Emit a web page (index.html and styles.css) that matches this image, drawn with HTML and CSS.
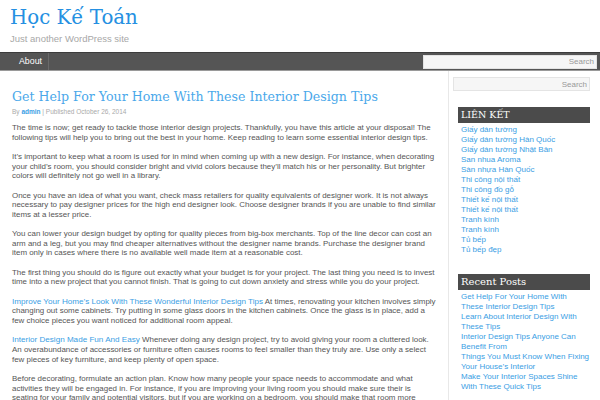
FILE: index.html
```html
<!DOCTYPE html>
<html>
<head>
<meta charset="utf-8">
<link rel="stylesheet" href="styles.css">
</head>
<body>
<header class="site-header">
  <h1 class="site-title">Học Kế Toán</h1>
  <div class="site-desc">Just another WordPress site</div>
</header>
<nav class="nav">
  <ul class="menu"><li>About</li></ul>
  <div class="nav-search"><input type="text" placeholder="Search"></div>
</nav>
<div class="wrap">
  <main class="content">
    <h2 class="post-title">Get Help For Your Home With These Interior Design Tips</h2>
    <div class="meta">By <a class="author">admin</a> | Published October 26, 2014</div>
    <p>The time is now; get ready to tackle those interior design projects. Thankfully, you have this article at your disposal! The following tips will help you to bring out the best in your home. Keep reading to learn some essential interior design tips.</p>
    <p>It’s important to keep what a room is used for in mind when coming up with a new design. For instance, when decorating your child’s room, you should consider bright and vivid colors because they’ll match his or her personality. But brighter colors will definitely not go well in a library.</p>
    <p>Once you have an idea of what you want, check mass retailers for quality equivalents of designer work. It is not always necessary to pay designer prices for the high end designer look. Choose designer brands if you are unable to find similar items at a lesser price.</p>
    <p>You can lower your design budget by opting for quality pieces from big-box merchants. Top of the line decor can cost an arm and a leg, but you may find cheaper alternatives without the designer name brands. Purchase the designer brand item only in cases where there is no available well made item at a reasonable cost.</p>
    <p>The first thing you should do is figure out exactly what your budget is for your project. The last thing you need is to invest time into a new project that you cannot finish. That is going to cut down anxiety and stress while you do your project.</p>
    <p><a>Improve Your Home’s Look With These Wonderful Interior Design Tips</a> At times, renovating your kitchen involves simply changing out some cabinets. Try putting in some glass doors in the kitchen cabinets. Once the glass is in place, add a few choice pieces you want noticed for additional room appeal.</p>
    <p><a>Interior Design Made Fun And Easy</a> Whenever doing any design project, try to avoid giving your room a cluttered look. An overabundance of accessories or furniture often causes rooms to feel smaller than they truly are. Use only a select few pieces of key furniture, and keep plenty of open space.</p>
    <p>Before decorating, formulate an action plan. Know how many people your space needs to accommodate and what activities they will be engaged in. For instance, if you are improving your living room you should make sure their is seating for your family and potential visitors, but if you are working on a bedroom, you should make that room more comfortable.</p>
  </main>
  <aside class="sidebar">
    <div class="side-search"><input type="text" placeholder="Search"></div>
    <section class="widget">
      <h3 class="widget-title">LIÊN KẾT</h3>
      <ul class="links">
        <li><a>Giấy dán tường</a></li>
        <li><a>Giấy dán tường Hàn Quốc</a></li>
        <li><a>Giấy dán tường Nhật Bản</a></li>
        <li><a>San nhua Aroma</a></li>
        <li><a>Sàn nhựa Hàn Quốc</a></li>
        <li><a>Thi công nội thất</a></li>
        <li><a>Thi công đồ gỗ</a></li>
        <li><a>Thiết kế nội thất</a></li>
        <li><a>Thiết kế nội thất</a></li>
        <li><a>Tranh kính</a></li>
        <li><a>Tranh kính</a></li>
        <li><a>Tủ bếp</a></li>
        <li><a>Tủ bếp đẹp</a></li>
      </ul>
    </section>
    <section class="widget">
      <h3 class="widget-title recent">Recent Posts</h3>
      <ul class="links">
        <li><a>Get Help For Your Home With These Interior Design Tips</a></li>
        <li><a>Learn About Interior Design With These Tips</a></li>
        <li><a>Interior Design Tips Anyone Can Benefit From</a></li>
        <li><a>Things You Must Know When Fixing Your House’s Interior</a></li>
        <li><a>Make Your Interior Spaces Shine With These Quick Tips</a></li>
      </ul>
    </section>
  </aside>
</div>
</body>
</html>
```

FILE: styles.css
```css
html, body {
  margin: 0;
  padding: 0;
  background: #fff;
  overflow: hidden;
}
body {
  font-family: "Liberation Sans", Arial, sans-serif;
  color: #555;
}
a { color: #3a9ee4; text-decoration: none; }

.site-header {
  height: 52px;
  padding-left: 10px;
  box-sizing: border-box;
  padding-top: 6px;
}
.site-title {
  margin: 0;
  font-family: "DejaVu Serif", serif;
  font-weight: normal;
  font-size: 19.8px;
  line-height: 24px;
  color: #2590e2;
}
.site-desc {
  margin-top: 3px;
  font-size: 9.5px;
  color: #a8a8a8;
  line-height: 11px;
}

.nav {
  display: flex;
  justify-content: space-between;
  align-items: center;
  height: 17px;
  background: #555;
  border-top: 1px solid #3c3c3c;
  border-bottom: 1px solid #9a9a9a;
}
.menu {
  list-style: none;
  margin: 0;
  padding: 0 0 0 10px;
  display: flex;
  height: 100%;
}
.menu li {
  padding: 0 6px 0 9px;
  color: #fff;
  font-size: 8.8px;
  line-height: 17px;
  border-right: 1px solid #6a6a6a;
}
.nav-search { padding-right: 3px; }
.nav-search input, .side-search input {
  display: block;
  box-sizing: border-box;
  border: 1px solid #e4e4e4;
  background: #f6f6f6;
  text-align: right;
  font-family: "Liberation Sans", Arial, sans-serif;
  font-size: 8px;
  padding: 0 2px;
  outline: none;
}
.nav-search input { width: 174px; height: 14px; }
.nav-search input::placeholder, .side-search input::placeholder { color: #999; }

.wrap {
  display: flex;
  align-items: flex-start;
}
.content {
  width: 449px;
  box-sizing: border-box;
  padding: 18px 10px 0 12px;
  border-right: 1px solid #e8e8e8;
  min-height: 400px;
  flex-shrink: 0;
}
.post-title {
  margin: 0;
  font-family: "DejaVu Serif", serif;
  font-weight: normal;
  font-size: 12.6px;
  line-height: 16px;
  color: #4aa8ea;
}
.meta {
  margin-top: 2px;
  font-size: 6.5px;
  color: #aaa;
  line-height: 9px;
}
.meta .author { font-weight: bold; color: #3a9ee4; }
.content p {
  margin: 9.65px 0 0 0;
  font-size: 7.95px;
  line-height: 9.65px;
  color: #555;
}
.content p a { font-size: 8.1px; }
.content p:first-of-type { margin-top: 7px; }

.sidebar {
  width: 151px;
  flex-shrink: 0;
  box-sizing: border-box;
  padding: 6px 0 0 4px;
}
.side-search input { width: 137px; height: 14px; }
.widget { margin-top: 16px; margin-left: 5px; width: 132px; }
.widget + .widget { margin-top: 19px; }
.widget-title {
  margin: 0;
  background: #4b4b4b;
  color: #fff;
  font-family: "DejaVu Serif", serif;
  font-weight: normal;
  font-size: 9.5px;
  line-height: 16px;
  padding-left: 3px;
}
.widget-title.recent { font-size: 10px; line-height: 16px; }
.links {
  list-style: none;
  margin: 2px 0 0 0;
  padding: 0 0 0 3px;
  width: 130px;
}
.links li {
  font-size: 8px;
  line-height: 10px;
}
```
